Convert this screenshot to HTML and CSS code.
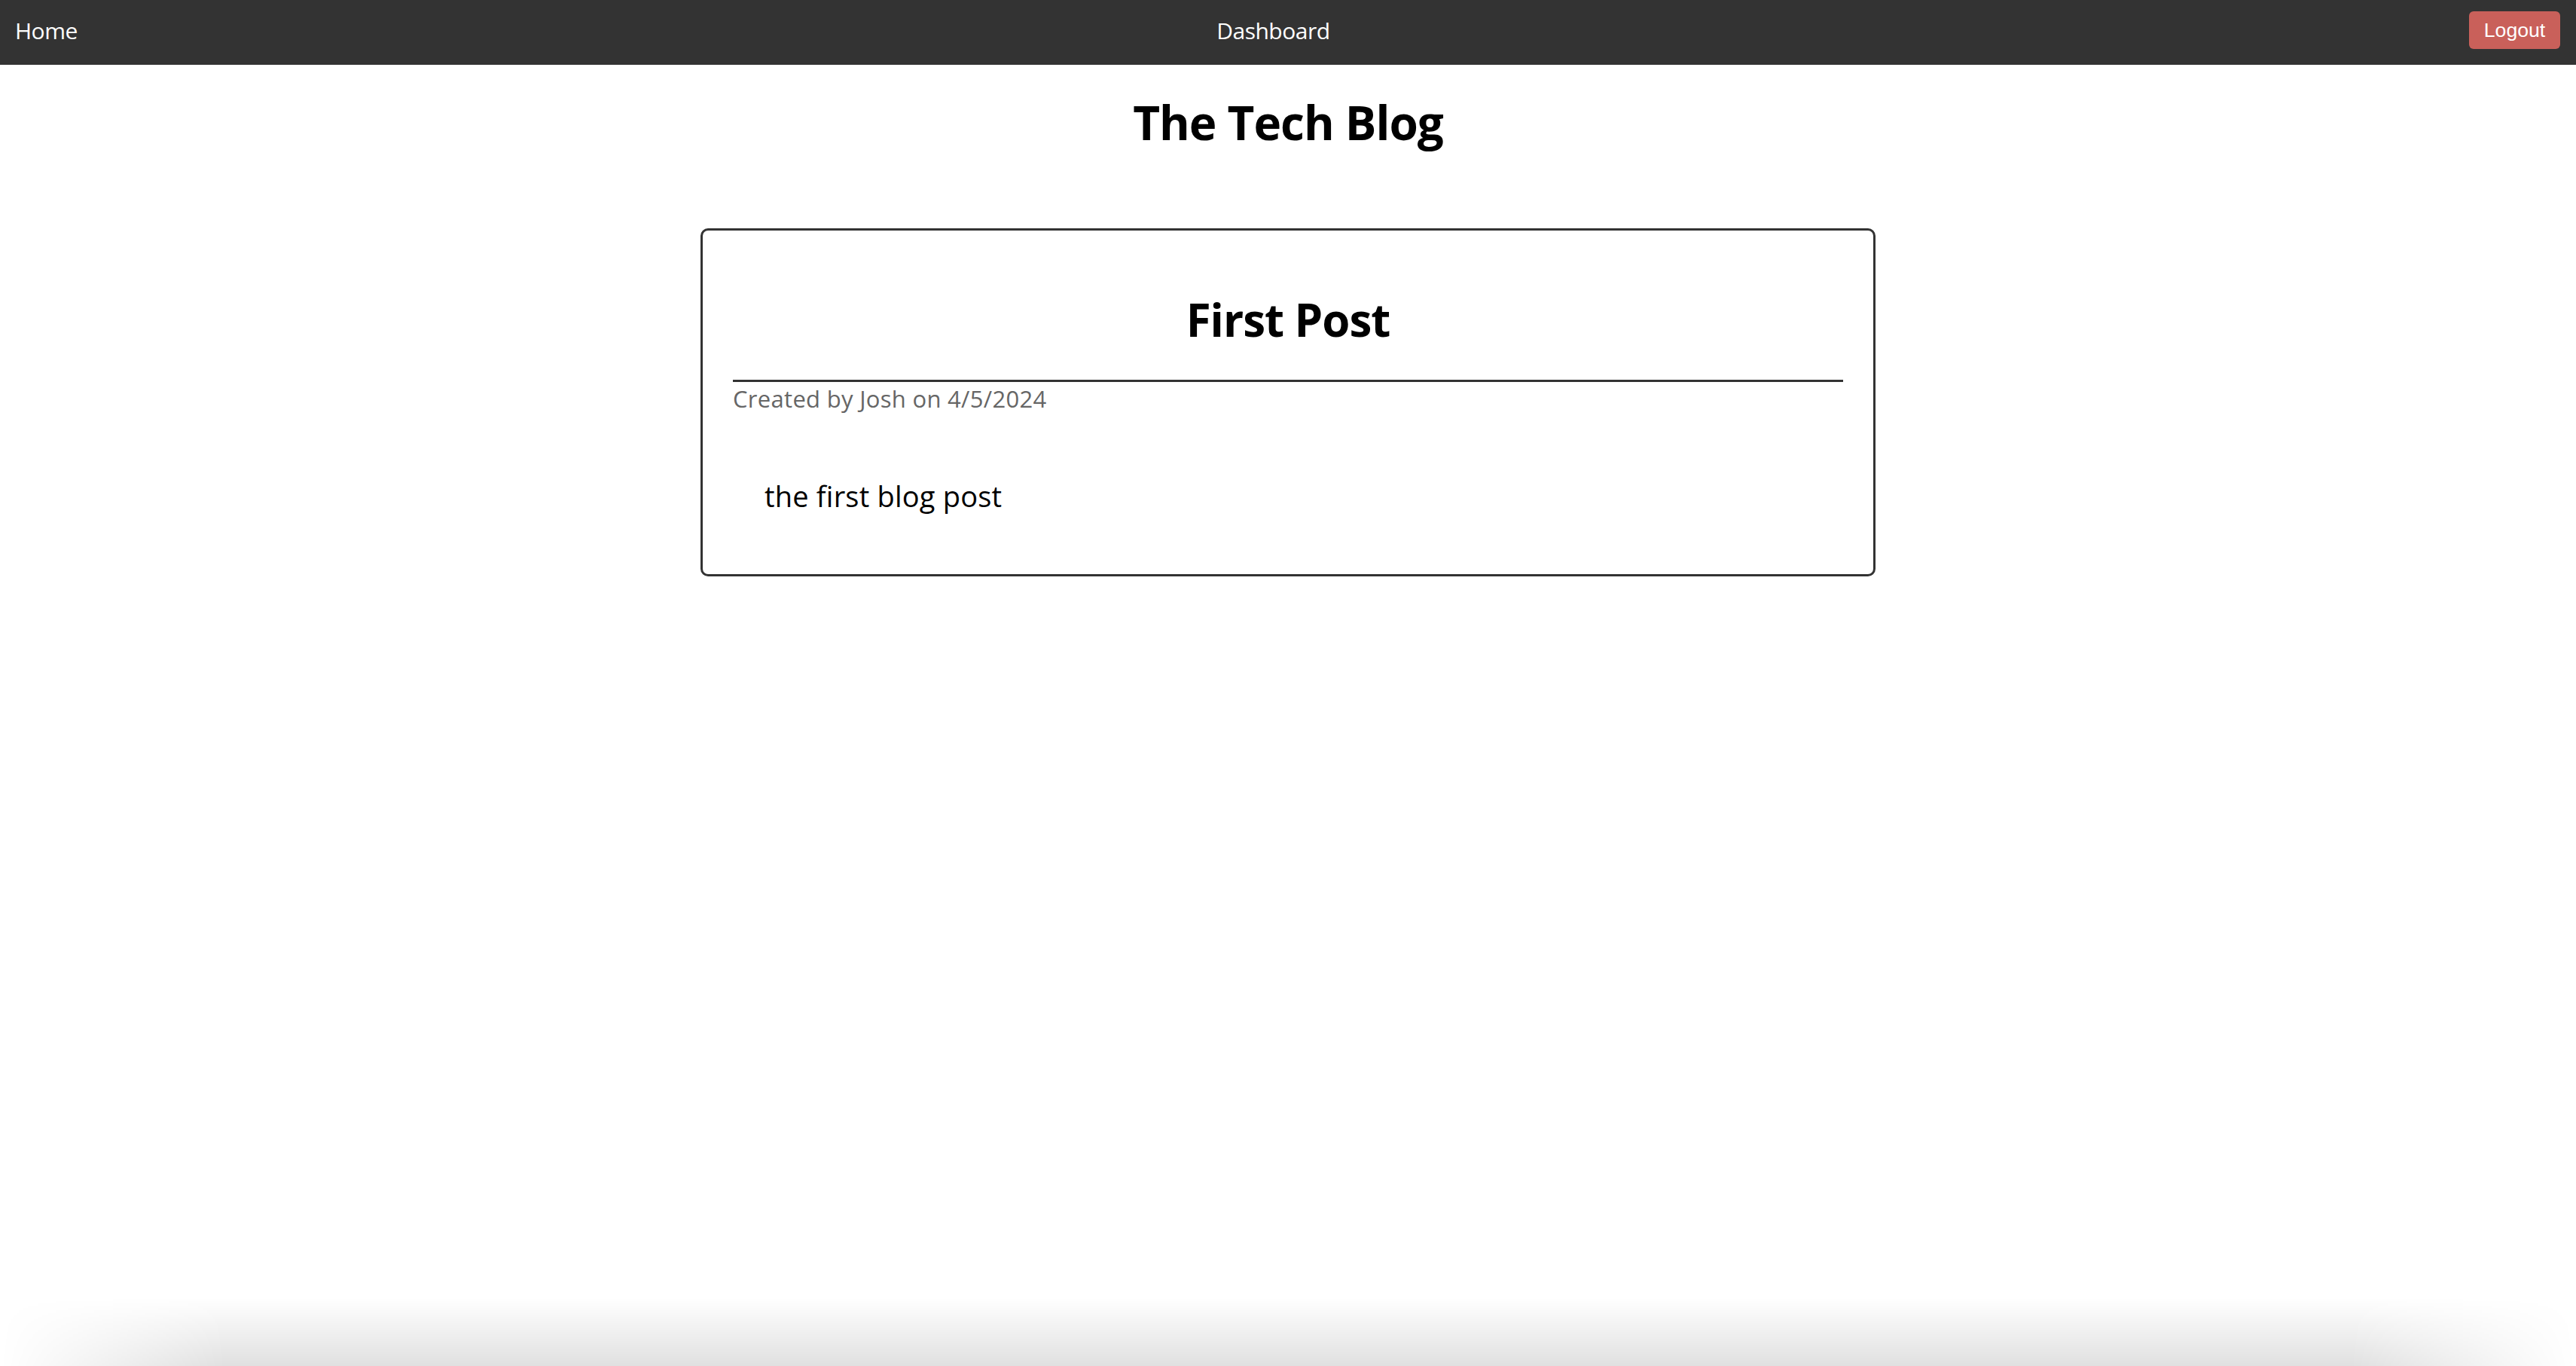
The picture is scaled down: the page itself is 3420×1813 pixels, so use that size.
FILE: index.html
```html
<!DOCTYPE html>
<html lang="en">
<head>
<meta charset="utf-8">
<title>The Tech Blog</title>
<link rel="stylesheet" href="styles.css">
</head>
<body>
<nav class="navbar">
  <a class="nav-link" href="#">Home</a>
  <a class="nav-link" href="#">Dashboard</a>
  <button class="logout-btn" type="button">Logout</button>
</nav>
<main class="page">
  <h1 class="site-title">The Tech Blog</h1>
  <article class="post-card">
    <header class="post-header">
      <h2 class="post-title">First Post</h2>
    </header>
    <p class="post-meta">Created by Josh on 4/5/2024</p>
    <p class="post-body">the first blog post</p>
  </article>
</main>
<div class="window-shade"></div>
</body>
</html>
```

FILE: styles.css
```css
html, body {
  margin: 0;
  padding: 0;
  background: #ffffff;
}

body {
  font-family: "Open Sans", "Noto Sans", sans-serif;
  color: #000;
  min-height: 1813px;
}

.navbar {
  display: flex;
  justify-content: space-between;
  align-items: center;
  height: 86px;
  padding: 0 21px 6px 20px;
  background: #333333;
  box-sizing: border-box;
}

.nav-link {
  color: #ffffff;
  text-decoration: none;
  font-size: 30px;
  letter-spacing: -0.5px;
}

.logout-btn {
  font-family: "Liberation Sans", Arial, sans-serif;
  font-size: 26.67px;
  color: #ffffff;
  background: #c9605a;
  border: none;
  border-radius: 6px;
  width: 121px;
  height: 50px;
  padding: 0;
}

.page {
  display: flex;
  flex-direction: column;
  align-items: center;
}

.site-title {
  margin: 34px 0 0;
  font-size: 62px;
  line-height: 84px;
  font-weight: 700;
  letter-spacing: -1px;
}

.post-card {
  width: 1560px;
  box-sizing: border-box;
  margin-top: 99px;
  border: 3px solid #333333;
  border-radius: 10px;
  padding: 40px 40px 80px;
}

.post-header {
  border-bottom: 3px solid #333333;
  padding-bottom: 38px;
}

.post-title {
  margin: 36px 0 0;
  text-align: center;
  font-size: 60px;
  line-height: 84px;
  font-weight: 700;
  letter-spacing: -1px;
}

.post-meta {
  margin: 2px 0 0;
  font-size: 31px;
  line-height: 40px;
  color: #666666;
  letter-spacing: 0.3px;
}

.post-body {
  margin: 85px 0 0 42px;
  font-size: 38px;
  line-height: 48px;
  letter-spacing: 0.2px;
}

.window-shade {
  position: fixed;
  left: 0;
  right: 0;
  bottom: 0;
  height: 90px;
  pointer-events: none;
  background: linear-gradient(to bottom, rgba(0,0,0,0), rgba(0,0,0,0.12));
  -webkit-mask-image: linear-gradient(to right, transparent 0, #000 300px, #000 calc(100% - 300px), transparent 100%);
  mask-image: linear-gradient(to right, transparent 0, #000 300px, #000 calc(100% - 300px), transparent 100%);
}
```
